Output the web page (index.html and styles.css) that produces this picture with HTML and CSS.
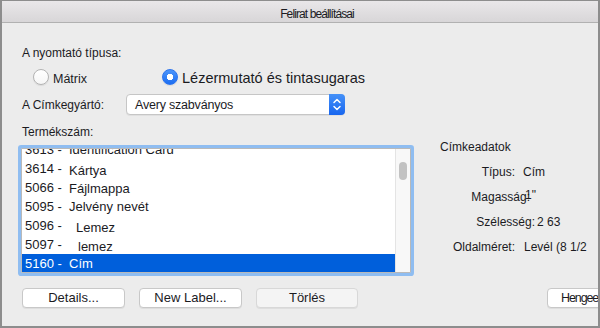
FILE: index.html
```html
<!DOCTYPE html>
<html lang="hu">
<head>
  <meta charset="UTF-8">
  <meta name="viewport" content="width=device-width, initial-scale=1">
  <link rel="stylesheet" href="styles.css">
</head>
<body>

  <div class="window">
    <div class="titlebar">Felirat beállításai</div>

    <div class="content">
      <div class="group-label">A nyomtató típusa:</div>

      <div class="radios">
        <label class="radio first"><span class="dot"></span><span class="radio-text">Mátrix</span></label>
        <label class="radio checked"><span class="dot"></span><span class="radio-text big">Lézermutató és tintasugaras</span></label>
      </div>

      <div class="field">
        <span class="field-label">A Címkegyártó:</span>
        <div class="select">
          <span class="select-value">Avery szabványos</span>
          <span class="stepper">
            <svg width="16" height="21" viewBox="0 0 16 21">
              <path d="M5 8.5 L8 5.5 L11 8.5" fill="none" stroke="#fff" stroke-width="1.5" stroke-linecap="round" stroke-linejoin="round"/>
              <path d="M5 12.5 L8 15.5 L11 12.5" fill="none" stroke="#fff" stroke-width="1.5" stroke-linecap="round" stroke-linejoin="round"/>
            </svg>
          </span>
        </div>
      </div>

      <div class="lower">
        <div class="list-col">
          <div class="group-label">Termékszám:</div>
          <div class="listbox">
            <ul class="rows">
              <li class="row"><span class="num">3613 -</span><span class="name">Identification Card</span></li>
              <li class="row"><span class="num">3614 -</span><span class="name low">Kártya</span></li>
              <li class="row"><span class="num">5066 -</span><span class="name low1">Fájlmappa</span></li>
              <li class="row"><span class="num">5095 -</span><span class="name">Jelvény nevét</span></li>
              <li class="row"><span class="num">5096 -</span><span class="name low indent">Lemez</span></li>
              <li class="row"><span class="num">5097 -</span><span class="name low indent2">lemez</span></li>
              <li class="row selected"><span class="num">5160 -</span><span class="name">Cím</span></li>
            </ul>
            <div class="scrollbar"><div class="thumb"></div></div>
          </div>
        </div>

        <div class="details">
          <div class="details-title">Címkeadatok</div>
          <div class="spec"><span class="spec-label">Típus:</span><span class="spec-value">Cím</span></div>
          <div class="spec height"><span class="spec-label">Magasság:</span><span class="spec-value">1"</span></div>
          <div class="spec width"><span class="spec-label">Szélesség:</span><span class="spec-value">2 63</span></div>
          <div class="spec page"><span class="spec-label">Oldalméret:</span><span class="spec-value">Levél (8 1/2</span></div>
        </div>
      </div>

      <div class="buttons">
        <button class="button">Details...</button>
        <button class="button">New Label...</button>
        <button class="button button-off">Törlés</button>
        <button class="button button-right">Hengee</button>
      </div>
    </div>
  </div>

</body>
</html>
```

FILE: styles.css
```css
body {
  margin: 0;
  background-color: #fff;
}

.window {
  width: 600px;
  height: 328px;
  box-sizing: border-box;
  border: 2px solid #8d8d8d;
  border-top-width: 1px;
  background-color: #ececec;
  overflow: hidden;
  font-family: "Liberation Sans", Arial, sans-serif;
  color: #1b1b1f;
}

.titlebar {
  height: 18px;
  padding-top: 3px;
  padding-left: 34px;
  border-bottom: 1px solid #b1b1b1;
  background: linear-gradient(#e9e7e9, #d8d6d8);
  text-align: center;
  font-size: 12px;
  line-height: 21px;
  letter-spacing: -0.9px;
}

.content {
  padding: 23px 0 0 20px;
}

.group-label {
  font-size: 12px;
  line-height: 15px;
}

/* radio buttons */
.radios {
  display: flex;
  align-items: center;
  height: 18px;
  margin-top: 7px;
}

.radio {
  display: flex;
  align-items: center;
}

.radio.first {
  margin-left: 11px;
  width: 129px;
}

.dot {
  width: 16px;
  height: 16px;
  box-sizing: border-box;
  border-radius: 50%;
  border: 1px solid #b3b3b3;
  background: linear-gradient(#fff, #f6f6f6);
  box-shadow: 0 1px 1px rgba(0,0,0,0.08);
}

.radio.checked .dot {
  border-color: #2c74ee;
  background: radial-gradient(circle, #fff 0, #fff 3px, transparent 3.5px), linear-gradient(#4c95fa, #1c6ef2);
}

.radio-text {
  margin-left: 4px;
  font-size: 12.5px;
  line-height: 15px;
  padding-top: 5px;
}

.radio-text.big {
  font-size: 14.5px;
  line-height: 17px;
  padding-top: 2px;
}

/* select */
.field {
  display: flex;
  align-items: center;
  margin-top: 8px;
  height: 21px;
}

.field-label {
  width: 104px;
  font-size: 12px;
  line-height: 15px;
  padding-top: 2px;
}

.select {
  display: flex;
  width: 219px;
  height: 21px;
  box-sizing: border-box;
  border: 1px solid #c6c6c6;
  border-radius: 4px;
  background-color: #fff;
  box-shadow: 0 1px 0 rgba(0,0,0,0.05);
}

.select-value {
  flex: 1;
  padding-left: 8px;
  padding-top: 2px;
  font-size: 12.5px;
  line-height: 17px;
  letter-spacing: -0.2px;
}

.stepper {
  width: 16px;
  height: 21px;
  margin: -1px -1px -1px 0;
  border-radius: 0 4px 4px 0;
  background: linear-gradient(#4591f8, #1866ef);
}

/* list */
.lower {
  display: flex;
  margin-top: 10px;
}

.listbox {
  display: flex;
  width: 390px;
  height: 125px;
  box-sizing: border-box;
  margin: 8px 0 0 -1px;
  border: 1px solid #b9b9b9;
  border-radius: 1px;
  background-color: #fff;
  box-shadow: 0 0 0 3px #8fbdf1;
}

.rows {
  flex: 1;
  list-style: none;
  margin: 0;
  padding: 0;
  overflow: hidden;
}

.rows .row:first-child {
  margin-top: -9px;
}

.row {
  display: flex;
  height: 19px;
  padding-left: 3px;
  font-size: 13px;
  line-height: 19px;
  white-space: nowrap;
}

.row.selected {
  background-color: #005fdb;
  color: #fff;
}

.num {
  width: 44px;
}

.name.low {
  padding-top: 2px;
}

.name.low1 {
  padding-top: 1px;
}

.name.indent {
  margin-left: 7px;
}

.name.indent2 {
  margin-left: 9px;
}

.scrollbar {
  width: 14px;
  border-left: 1px solid #e4e4e4;
  background-color: #f8f8f8;
}

.thumb {
  width: 8px;
  height: 18px;
  margin: 13px 0 0 3px;
  border-radius: 4px;
  background-color: #c2c2c2;
}

/* label details */
.details {
  margin-left: 29px;
  margin-top: 10px;
  font-size: 12px;
  line-height: 25px;
}

.spec {
  display: flex;
  white-space: nowrap;
}

.spec-label {
  width: 75px;
  text-align: right;
}

.spec-value {
  margin-left: 8px;
}

.spec.height .spec-label {
  width: 90px;
}

.spec.height .spec-value {
  margin-left: -5px;
  margin-top: -2px;
}

.spec.width .spec-label {
  width: 95px;
}

.spec.width .spec-value {
  margin-left: 2px;
}

.spec.page .spec-value {
  margin-left: 9px;
}

/* buttons */
.buttons {
  display: flex;
  gap: 14px;
  margin-top: 15px;
}

.button {
  flex-shrink: 0;
  width: 103px;
  height: 20px;
  padding: 0;
  border: 1px solid #c8c8c8;
  border-radius: 4px;
  background-color: #fff;
  box-shadow: 0 1px 0 rgba(0,0,0,0.06);
  font-family: "Liberation Sans", Arial, sans-serif;
  font-size: 13px;
  line-height: 18px;
  color: #1b1b1f;
}

.button-off {
  width: 102px;
  background-color: #f4f4f4;
  border-color: #d8d8d8;
}

.button-right {
  width: 80px;
  margin-left: 175px;
  padding-left: 13px;
  text-align: left;
  font-size: 12.5px;
  letter-spacing: -1.1px;
}
```
